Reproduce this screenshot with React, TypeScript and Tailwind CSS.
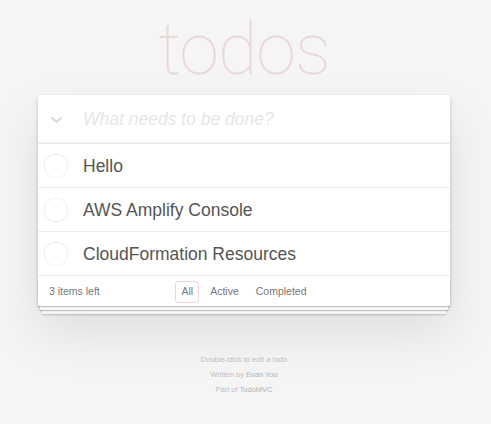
import React from "react";

const items = ["Hello", "AWS Amplify Console", "CloudFormation Resources"];

function Circle() {
  return (
    <svg width="26" height="26" viewBox="0 0 26 26" className="shrink-0">
      <circle cx="13" cy="13" r="12" fill="none" stroke="#ededed" strokeWidth="1" />
    </svg>
  );
}

export default function App() {
  return (
    <div className="min-h-screen bg-[#f5f5f5] font-['Liberation_Sans',Arial,sans-serif] text-[#4d4d4d]">
      <div className="ml-[38px] w-[412px]">
        <div className="h-[95px] flex justify-center">
          <h1 className="pt-[14px] text-[72px] leading-none font-thin text-[#ead7d7] font-['Roboto',sans-serif] tracking-[-1px]">
            todos
          </h1>
        </div>
        <section className="relative bg-white shadow-[0_2px_4px_rgba(0,0,0,0.2),0_25px_50px_rgba(0,0,0,0.1)]">
          <div className="h-[49px] flex items-center border-b border-[#e6e6e6] shadow-[inset_0_-2px_1px_rgba(0,0,0,0.03)]">
            <div className="w-[45px] pl-[12px] pt-[2px]">
              <svg width="13" height="8" viewBox="0 0 13 8">
                <path d="M1.5 1.5 L6.5 6 L11.5 1.5" fill="none" stroke="#d9d9d9" strokeWidth="2" />
              </svg>
            </div>
            <span className="text-[17.5px] italic text-[#e6e6e6] font-light">What needs to be done?</span>
          </div>
          {items.map((t) => (
            <div key={t} className="h-[44px] flex items-center border-b border-[#ededed]">
              <div className="w-[45px] pl-[5px] pt-[1px]">
                <Circle />
              </div>
              <span className="text-[17.5px] text-[#555] pt-[1px]">{t}</span>
            </div>
          ))}
          <div className="relative h-[30px] grid grid-cols-[1fr_auto_1fr] items-center px-[11px] text-[10.5px] text-[#777]">
            <div
              className="absolute inset-x-0 bottom-0 h-[30px] pointer-events-none shadow-[0_1px_1px_rgba(0,0,0,0.2),0_6px_0_-2px_#f6f6f6,0_7px_1px_-2px_rgba(0,0,0,0.2),0_12px_0_-4px_#f6f6f6,0_13px_2px_-4px_rgba(0,0,0,0.2)]"
            />
            <span className="relative pt-[2px]">3 items left</span>
            <div className="relative flex items-center gap-[5px] pt-[2px]">
              <span className="px-[5px] py-[2px] border border-[rgba(175,47,47,0.2)] rounded-[3px]">All</span>
              <span className="px-[5px] py-[2px] border border-transparent">Active</span>
              <span className="px-[5px] py-[2px] border border-transparent">Completed</span>
            </div>
            <span />
          </div>
        </section>
        <footer className="mt-[46px] flex flex-col items-center text-[7.5px] text-[#bfbfbf] leading-[15px] [text-shadow:0_1px_0_rgba(255,255,255,0.5)]">
          <p>Double-click to edit a todo</p>
          <p>
            Written by <span className="text-[#b0b0b0]">Evan You</span>
          </p>
          <p>
            Part of <span className="text-[#b0b0b0]">TodoMVC</span>
          </p>
        </footer>
      </div>
    </div>
  );
}
